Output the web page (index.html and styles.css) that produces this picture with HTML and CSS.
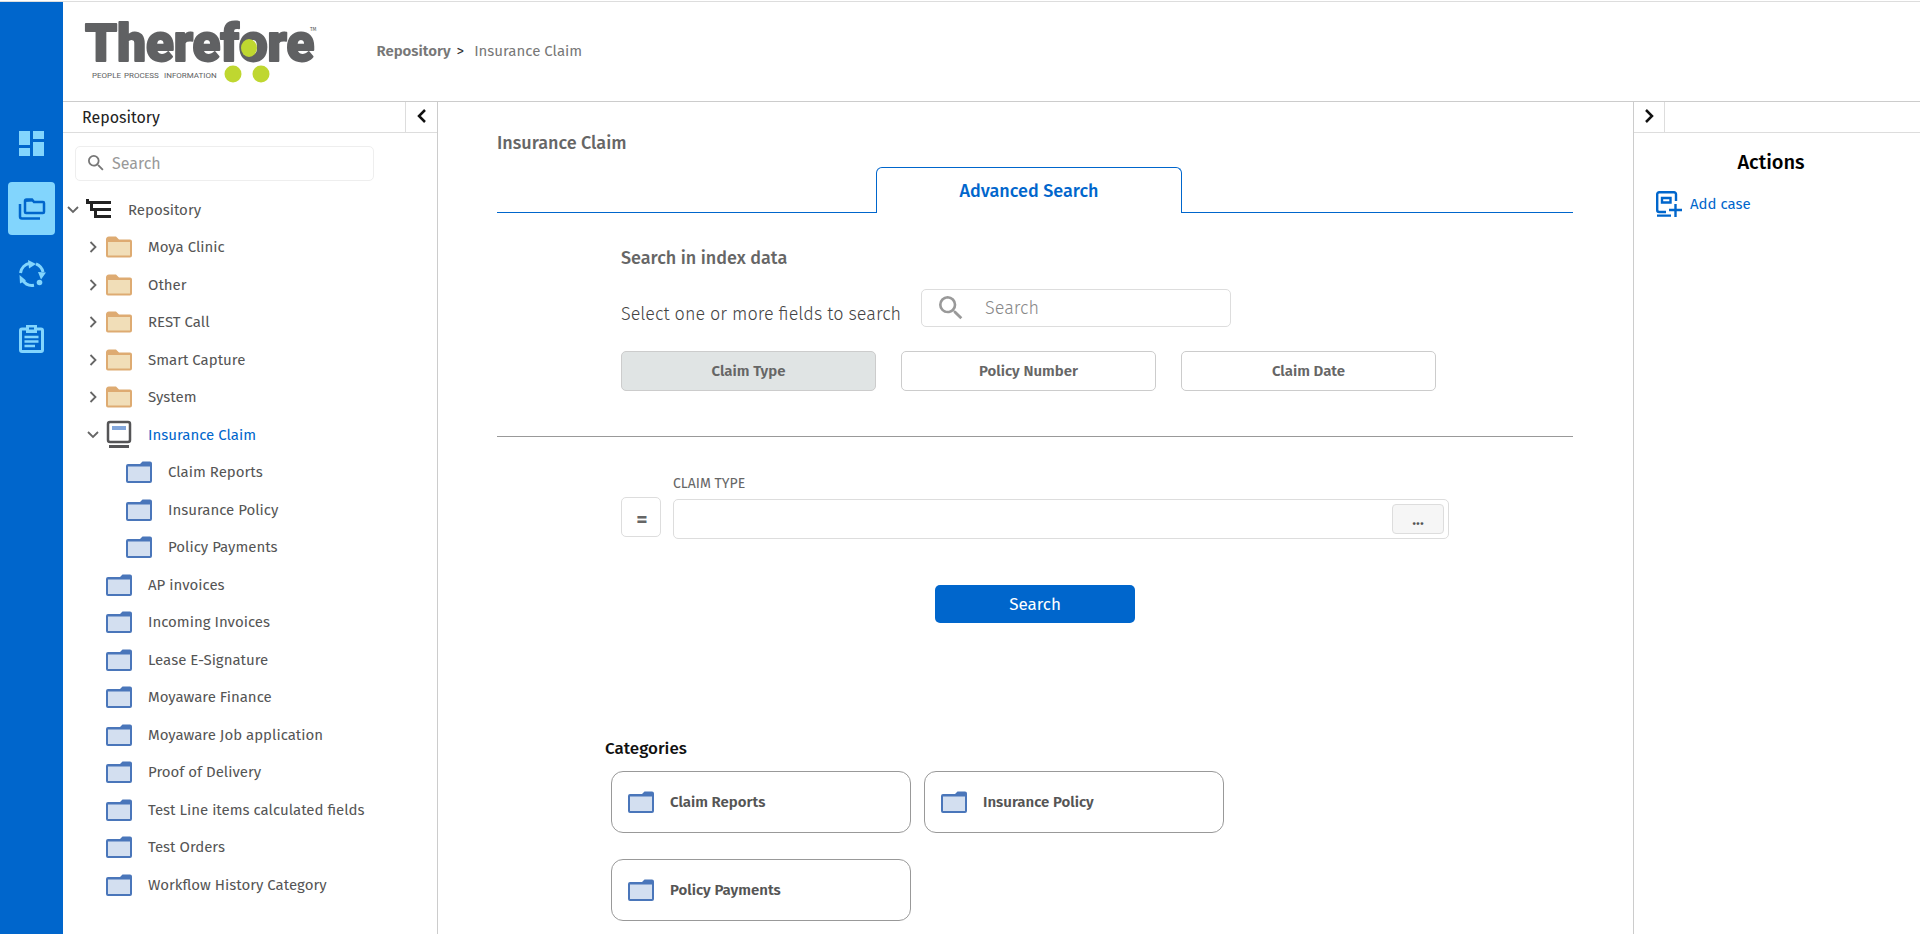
FILE: index.html
```html
<!DOCTYPE html>
<html lang="en">

<head>
    <meta charset="UTF-8">
    <meta name="viewport" content="width=device-width, initial-scale=1.0">
    <title>Therefore - Insurance Claim</title>
    <link rel="stylesheet" href="styles.css">
</head>

<body>
    <!-- shared icons -->
    <svg class="sprite" aria-hidden="true">
        <symbol id="i-folder" viewBox="0 0 28 24">
            <path d="M1 5a3 3 0 0 1 3-3.500h7l3 3h11a2 2 0 0 1 2 2v14a2 2 0 0 1-2 2H3a2 2 0 0 1-2-2z" fill="#deab72" />
            <path d="M3 7h22v13.500H3z" fill="#f1deb8" />
        </symbol>
        <symbol id="i-category" viewBox="0 0 28 24">
            <path d="M3 4h12l2.500-2.500H25a2 2 0 0 1 2 2V21a2 2 0 0 1-2 2H3a2 2 0 0 1-2-2V6a2 2 0 0 1 2-2z" fill="#4a76ba" />
            <path d="M3 6.500h22V21H3z" fill="#d3dff0" />
        </symbol>
        <symbol id="i-case" viewBox="0 0 28 30">
            <rect x="3" y="2" width="22" height="20" rx="2" fill="#fff" stroke="#555557" stroke-width="2.500" />
            <path d="M7 6h14v4H7z" fill="#82a6db" />
            <path d="M4 25h20v3H4z" fill="#555557" />
        </symbol>
        <symbol id="i-root" viewBox="0 0 28 24">
            <path d="M2 4.500h24M6 11.500h20M10 18.500h16" stroke="#222" stroke-width="3" />
            <path d="M2.500 1v5M6.500 4v9M10.500 11v9" stroke="#222" stroke-width="3" />
        </symbol>
        <symbol id="i-down" viewBox="0 0 12 12">
            <path d="M1 3l5 5 5-5" fill="none" stroke="#666" stroke-width="1.800" />
        </symbol>
        <symbol id="i-right" viewBox="0 0 12 12">
            <path d="M3.500 1l5 5-5 5" fill="none" stroke="#666" stroke-width="1.800" />
        </symbol>
        <symbol id="i-search" viewBox="3 3 18 18">
            <path d="M15.500 14h-.790l-.280-.270A6.470 6.470 0 0 0 16 9.500 6.500 6.500 0 1 0 9.500 16c1.610 0 3.090-.590 4.230-1.570l.270.280v.790l5 4.990L20.490 19l-4.990-5zm-6 0C7.010 14 5 11.990 5 9.500S7.010 5 9.500 5 14 7.010 14 9.500 11.990 14 9.500 14z" fill="currentColor" />
        </symbol>
    </svg>

    <div class="app">
        <nav class="sidebar">
            <a href="#" class="sidebar__item" aria-label="Dashboard">
                <svg width="27" height="27" viewBox="0 0 27 27" fill="currentColor">
                    <path d="M1 1h11v14H1zM15 1h11v8H15zM1 18h11v8H1zM15 12h11v14H15z" />
                </svg>
            </a>
            <a href="#" class="sidebar__item active" aria-label="Repository">
                <svg width="28" height="24" viewBox="0 0 28 24" fill="none" stroke="currentColor" stroke-width="2.500">
                    <path d="M7 4.500V15a1 1 0 0 0 1 1h17a1 1 0 0 0 1-1V6a1 1 0 0 0-1-1h-9l-2-2.500H8.500A1.500 1.500 0 0 0 7 4z" />
                    <path d="M7 5V3a1 1 0 0 1 1-1h6l2 2.500z" fill="currentColor" stroke="none" />
                    <path d="M2 7v12.500a2 2 0 0 0 2 2h18" />
                </svg>
            </a>
            <a href="#" class="sidebar__item" aria-label="Workflow">
                <svg width="28" height="28" viewBox="0 0 28 28" fill="none" stroke="currentColor" stroke-width="3">
                    <path d="M2.500 13A11.500 11.500 0 0 1 12 3.200M18 3.800A11.500 11.500 0 0 1 25 12M16 25.300A11.500 11.500 0 0 1 4.500 20" />
                    <path d="M10 0l8 4-7 4.500zM20 12l8 .500-5 7zM1.500 15l6.500 5.500-6 3z" fill="currentColor" stroke="none" />
                    <circle cx="21.500" cy="22.500" r="2.800" fill="currentColor" stroke="none" />
                </svg>
            </a>
            <a href="#" class="sidebar__item" aria-label="Tasks">
                <svg width="27" height="30" viewBox="0 0 27 30" fill="none" stroke="currentColor">
                    <rect x="2.500" y="5" width="22" height="22.500" rx="1.500" stroke-width="3" />
                    <path d="M8 1h11v8H8z" fill="currentColor" stroke="none" />
                    <path d="M11 3.500h5v2h-5z" fill="#06c" stroke="none" />
                    <path d="M6.500 13h14M6.500 17.500h14M6.500 22H17" stroke-width="2.500" />
                </svg>
            </a>
        </nav>

        <div class="page">
            <header class="header">
                <svg class="logo" width="226" height="76" viewBox="0 0 226 76">
                    <text class="logo__name" x="1" y="47">Therefore</text>
                    <text class="logo__tag" x="8" y="64">PEOPLE</text>
                    <text class="logo__tag" x="40" y="64">PROCESS</text>
                    <text class="logo__tag" x="80" y="64">INFORMATION</text>
                    <g fill="#bfd730">
                        <ellipse cx="165" cy="34" rx="8" ry="9" />
                        <circle cx="149" cy="60" r="8.500" />
                        <circle cx="177" cy="60" r="8.500" />
                    </g>
                </svg>
                <span class="logo__tm">TM</span>
                <div class="breadcrumb">
                    <a href="#"><b>Repository</b></a>
                    <span class="breadcrumb__sep">&gt;</span>
                    <a href="#">Insurance Claim</a>
                </div>
            </header>

            <div class="content">
                <aside class="panel tree-panel">
                    <div class="panel__head">
                        <span class="panel__title">Repository</span>
                        <button type="button" class="panel__toggle" aria-label="Collapse">
                            <svg width="10" height="16" viewBox="0 0 10 16"><path d="M8 2L2 8l6 6" fill="none" stroke="#111" stroke-width="2.500" /></svg>
                        </button>
                    </div>
                    <label class="tree-search">
                        <svg width="16" height="16"><use href="#i-search" /></svg>
                        <input type="text" placeholder="Search" aria-label="Search repository">
                    </label>
                    <ul class="tree">
                        <li><svg class="arrow"><use href="#i-down" /></svg><svg class="icon"><use href="#i-root" /></svg><a href="#">Repository</a></li>
                        <li class="l1"><svg class="arrow"><use href="#i-right" /></svg><svg class="icon"><use href="#i-folder" /></svg><a href="#">Moya Clinic</a></li>
                        <li class="l1"><svg class="arrow"><use href="#i-right" /></svg><svg class="icon"><use href="#i-folder" /></svg><a href="#">Other</a></li>
                        <li class="l1"><svg class="arrow"><use href="#i-right" /></svg><svg class="icon"><use href="#i-folder" /></svg><a href="#">REST Call</a></li>
                        <li class="l1"><svg class="arrow"><use href="#i-right" /></svg><svg class="icon"><use href="#i-folder" /></svg><a href="#">Smart Capture</a></li>
                        <li class="l1"><svg class="arrow"><use href="#i-right" /></svg><svg class="icon"><use href="#i-folder" /></svg><a href="#">System</a></li>
                        <li class="l1 selected"><svg class="arrow"><use href="#i-down" /></svg><svg class="icon icon--case"><use href="#i-case" /></svg><a href="#">Insurance Claim</a></li>
                        <li class="l2"><svg class="arrow"></svg><svg class="icon"><use href="#i-category" /></svg><a href="#">Claim Reports</a></li>
                        <li class="l2"><svg class="arrow"></svg><svg class="icon"><use href="#i-category" /></svg><a href="#">Insurance Policy</a></li>
                        <li class="l2"><svg class="arrow"></svg><svg class="icon"><use href="#i-category" /></svg><a href="#">Policy Payments</a></li>
                        <li class="l1"><svg class="arrow"></svg><svg class="icon"><use href="#i-category" /></svg><a href="#">AP invoices</a></li>
                        <li class="l1"><svg class="arrow"></svg><svg class="icon"><use href="#i-category" /></svg><a href="#">Incoming Invoices</a></li>
                        <li class="l1"><svg class="arrow"></svg><svg class="icon"><use href="#i-category" /></svg><a href="#">Lease E-Signature</a></li>
                        <li class="l1"><svg class="arrow"></svg><svg class="icon"><use href="#i-category" /></svg><a href="#">Moyaware Finance</a></li>
                        <li class="l1"><svg class="arrow"></svg><svg class="icon"><use href="#i-category" /></svg><a href="#">Moyaware Job application</a></li>
                        <li class="l1"><svg class="arrow"></svg><svg class="icon"><use href="#i-category" /></svg><a href="#">Proof of Delivery</a></li>
                        <li class="l1"><svg class="arrow"></svg><svg class="icon"><use href="#i-category" /></svg><a href="#">Test Line items calculated fields</a></li>
                        <li class="l1"><svg class="arrow"></svg><svg class="icon"><use href="#i-category" /></svg><a href="#">Test Orders</a></li>
                        <li class="l1"><svg class="arrow"></svg><svg class="icon"><use href="#i-category" /></svg><a href="#">Workflow History Category</a></li>
                    </ul>
                </aside>

                <main class="main">
                    <h1 class="title">Insurance Claim</h1>
                    <div class="tabs">
                        <button type="button" class="tabs__tab">Advanced Search</button>
                    </div>

                    <section class="fields">
                        <h2 class="title">Search in index data</h2>
                        <div class="fields__filter">
                            <label for="fieldSearch">Select one or more fields to search</label>
                            <div class="fields__search">
                                <svg width="24" height="24"><use href="#i-search" /></svg>
                                <input type="text" id="fieldSearch" placeholder="Search">
                            </div>
                        </div>
                        <div class="fields__list">
                            <button type="button" class="selected">Claim Type</button>
                            <button type="button">Policy Number</button>
                            <button type="button">Claim Date</button>
                        </div>
                    </section>

                    <section class="query">
                        <div class="query__row">
                            <button type="button" class="query__op">=</button>
                            <div class="query__field">
                                <label for="claimType">CLAIM TYPE</label>
                                <div class="query__box">
                                    <input type="text" id="claimType">
                                    <button type="button">...</button>
                                </div>
                            </div>
                        </div>
                        <button type="button" class="query__submit">Search</button>
                    </section>

                    <section class="categories">
                        <h2>Categories</h2>
                        <div class="categories__list">
                            <a href="#" class="card"><svg class="icon"><use href="#i-category" /></svg>Claim Reports</a>
                            <a href="#" class="card"><svg class="icon"><use href="#i-category" /></svg>Insurance Policy</a>
                            <a href="#" class="card"><svg class="icon"><use href="#i-category" /></svg>Policy Payments</a>
                        </div>
                    </section>
                </main>

                <aside class="panel actions">
                    <div class="panel__head">
                        <button type="button" class="panel__toggle" aria-label="Expand">
                            <svg width="10" height="16" viewBox="0 0 10 16"><path d="M2 2l6 6-6 6" fill="none" stroke="#111" stroke-width="2.500" /></svg>
                        </button>
                    </div>
                    <h2>Actions</h2>
                    <a href="#" class="actions__link">
                        <svg width="26" height="26" viewBox="0 0 26 26" fill="none" stroke="currentColor" stroke-width="2.400">
                            <path d="M20 10V3.200a2 2 0 0 0-2-2H3.200a2 2 0 0 0-2 2V19a2 2 0 0 0 2 2H10" />
                            <path d="M6 7h8.500v4.500H6z" />
                            <path d="M1 24.600h14M19.500 13v13M13 19h13" />
                        </svg>
                        Add case
                    </a>
                </aside>
            </div>
        </div>
    </div>
</body>

</html>
```
FILE: styles.css
```css
* {
    box-sizing: border-box;
}

body {
    margin: 0;
    padding-top: 1px;
    background-color: #fff;
    color: #555;
    font-family: "Fira Sans", "Noto Sans", sans-serif;
    font-size: 15px;
}

h1,
h2,
ul {
    margin: 0;
    padding: 0;
}

a {
    color: inherit;
    text-decoration: none;
}

button,
input {
    padding: 0;
    font-family: inherit;
    color: inherit;
    background: none;
    border: none;
    outline: none;
}

button {
    cursor: pointer;
}

input {
    flex: 1;
    min-width: 0;
}

input::placeholder {
    color: #999;
    opacity: 1;
}

svg {
    display: block;
    flex-shrink: 0;
}

.sprite {
    display: none;
}

.app {
    display: flex;
    min-height: calc(100vh - 1px);
    border-top: 1px solid #ddd;
}

/* sidebar */
.sidebar {
    display: flex;
    flex-direction: column;
    align-items: center;
    gap: 12px;
    width: 63px;
    padding-top: 115px;
    background-color: #06c;
}

.sidebar__item {
    display: flex;
    align-items: center;
    justify-content: center;
    width: 47px;
    height: 53px;
    border-radius: 4px;
    color: #82d5fd;
}

.sidebar__item.active {
    background-color: #82d5fd;
    color: #06c;
}

.page {
    flex: 1;
    display: flex;
    flex-direction: column;
    min-width: 0;
}

/* header */
.header {
    display: flex;
    align-items: center;
    height: 100px;
    padding-left: 21px;
    border-bottom: 1px solid #ccc;
}

.logo {
    overflow: visible;
}

.logo text {
    font-family: Roboto, sans-serif;
    fill: #606163;
}

.logo .logo__name {
    font-size: 51px;
    font-weight: 900;
    stroke: #606163;
    stroke-width: 2px;
    stroke-linejoin: round;
}

.logo .logo__tag {
    font-size: 8px;
}

.logo__tm {
    align-self: flex-start;
    margin-top: 24px;
    font-size: 5px;
}

.breadcrumb {
    display: flex;
    margin-left: 60px;
    padding-bottom: 1px;
    color: #777;
}

.breadcrumb b {
    font-weight: 600;
}

.breadcrumb__sep {
    margin: 0 10px 0 6px;
    color: #333;
}

.content {
    flex: 1;
    display: flex;
}

/* side panels */
.panel__head {
    display: flex;
    align-items: stretch;
    height: 31px;
    border-bottom: 1px solid #ddd;
}

.panel__title {
    flex: 1;
    padding-left: 19px;
    font-size: 16px;
    line-height: 31px;
    color: #222;
}

.panel__toggle {
    display: flex;
    align-items: center;
    justify-content: center;
    width: 32px;
    padding-bottom: 2px;
    border-left: 1px solid #ddd;
}

.tree-panel {
    width: 375px;
    border-right: 1px solid #ccc;
}

.tree-search {
    display: flex;
    align-items: center;
    gap: 8px;
    width: 299px;
    height: 35px;
    margin: 13px 0 10px 12px;
    padding: 0 12px 1px;
    border: 1px solid #eee;
    border-radius: 5px;
    color: #777;
}

.tree-search input {
    font-size: 16px;
}

.tree {
    list-style: none;
}

.tree li {
    display: flex;
    align-items: center;
    height: 37px;
}

.tree li:nth-child(even) {
    height: 38px;
}

.tree .l1 {
    padding-left: 20px;
}

.tree .l2 {
    padding-left: 40px;
}

.tree .selected {
    color: #06c;
}

.arrow {
    width: 12px;
    height: 12px;
    margin: 0 6px 0 4px;
}

.icon {
    width: 28px;
    height: 24px;
    margin-right: 15px;
}

.icon--case {
    height: 30px;
}

/* main */
.main {
    flex: 1;
    min-width: 0;
    padding: 28px 60px 12px 59px;
}

.title {
    font-size: 18px;
    font-weight: 500;
    line-height: 26px;
    color: #666;
}

.tabs {
    display: grid;
    grid-template-columns: 379fr 306fr 391fr;
    margin-top: 11px;
}

.tabs::before,
.tabs::after {
    content: "";
    border-bottom: 1px solid #06c;
}

.tabs__tab {
    height: 46px;
    border: 1px solid #06c;
    border-bottom: none;
    border-radius: 6px 6px 0 0;
    font-size: 18px;
    font-weight: 500;
    color: #06c;
}

.fields {
    padding: 32px 124px 45px;
    border-bottom: 1px solid #999;
}

.fields__filter {
    display: flex;
    align-items: flex-end;
    margin-top: 18px;
}

.fields__filter label {
    width: 300px;
    font-size: 18px;
    font-weight: 300;
    line-height: 26px;
    color: #444;
}

.fields__search {
    display: flex;
    align-items: center;
    gap: 22px;
    width: 310px;
    height: 38px;
    padding: 0 17px;
    border: 1px solid #ddd;
    border-radius: 5px;
    color: #999;
}

.fields__search input {
    font-size: 18px;
    font-weight: 300;
}

.fields__search input::placeholder {
    color: #888;
}

.fields__list {
    display: flex;
    gap: 25px;
    margin-top: 24px;
}

.fields__list button {
    width: 255px;
    height: 40px;
    border: 1px solid #ccc;
    border-radius: 5px;
    font-size: 15px;
    font-weight: 600;
    color: #666;
}

.fields__list .selected {
    background-color: #e0e4e4;
}

.query {
    padding: 36px 124px 0;
}

.query__row {
    display: flex;
    gap: 12px;
}

.query__op {
    width: 40px;
    height: 40px;
    margin-top: 24px;
    padding: 4px 0 0 2px;
    border: 1px solid #ddd;
    border-radius: 5px;
    font-size: 22px;
    font-weight: 600;
    color: #666;
}

.query__field {
    flex: 1;
}

.query__field label {
    display: block;
    margin-bottom: 4px;
    font-size: 14px;
    line-height: 22px;
    color: #666;
}

.query__box {
    display: flex;
    height: 40px;
    padding: 4px;
    border: 1px solid #ddd;
    border-radius: 5px;
}

.query__box button {
    width: 52px;
    border: 1px solid #ddd;
    border-radius: 4px;
    background-color: #f6f6f6;
    font-size: 16px;
    font-weight: 600;
}

.query__submit {
    display: block;
    width: 200px;
    height: 38px;
    margin: 46px auto 0;
    border-radius: 5px;
    background-color: #06c;
    font-size: 17px;
    color: #fff;
}

.categories {
    margin: 113px 0 0 108px;
}

.categories h2 {
    font-size: 17px;
    font-weight: 500;
    line-height: 26px;
    color: #111;
}

.categories__list {
    display: flex;
    flex-wrap: wrap;
    gap: 26px 13px;
    max-width: 700px;
    margin: 9px 0 0 6px;
}

.card {
    display: flex;
    align-items: center;
    width: 300px;
    height: 62px;
    padding-left: 15px;
    border: 1px solid #999;
    border-radius: 12px;
    font-weight: 600;
}

/* actions */
.actions {
    width: 287px;
    border-left: 1px solid #ccc;
}

.actions .panel__toggle {
    width: 31px;
    border-right: 1px solid #ddd;
    border-left: none;
}

.actions h2 {
    margin-top: 16px;
    padding-right: 12px;
    font-size: 20px;
    font-weight: 500;
    line-height: 26px;
    text-align: center;
    color: #000;
}

.actions__link {
    display: flex;
    align-items: center;
    gap: 8px;
    width: max-content;
    margin: 16px 0 0 22px;
    color: #06c;
}
```
